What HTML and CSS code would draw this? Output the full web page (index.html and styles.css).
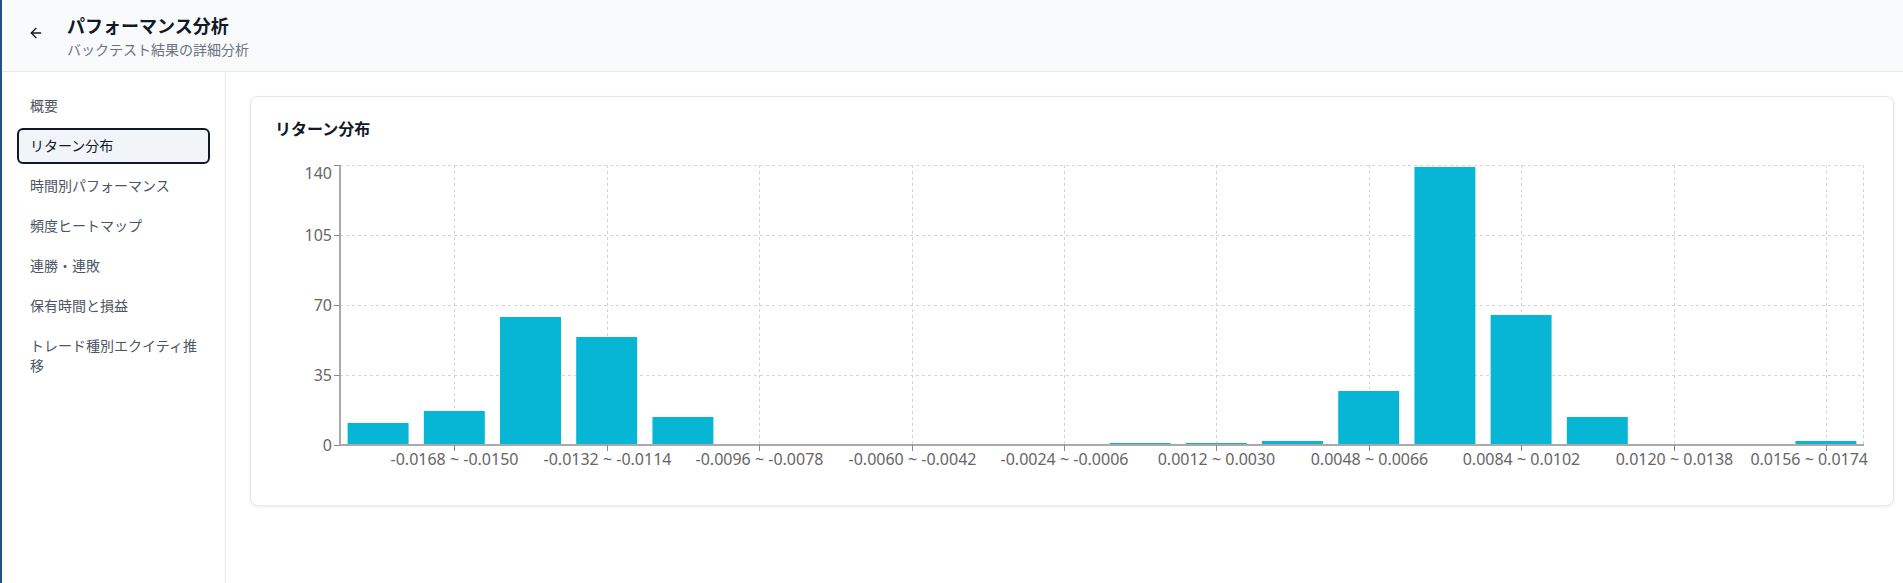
FILE: index.html
```html
<!DOCTYPE html>
<html lang="ja">
<head>
    <meta charset="UTF-8">
    <meta name="viewport" content="width=device-width, initial-scale=1.0">
    <title>パフォーマンス分析</title>
    <link rel="stylesheet" href="styles.css">
</head>
<body>
    <header class="page-header">
        <button class="back-btn" aria-label="戻る">
            <svg width="16" height="16" viewBox="0 0 24 24" fill="none" stroke="currentColor" stroke-width="2" stroke-linecap="round" stroke-linejoin="round">
                <path d="m12 19-7-7 7-7"/>
                <path d="M19 12H5"/>
            </svg>
        </button>
        <div class="header-text">
            <h1>パフォーマンス分析</h1>
            <p>バックテスト結果の詳細分析</p>
        </div>
    </header>

    <div class="layout">
        <nav class="sidebar">
            <button class="nav-item">概要</button>
            <button class="nav-item active">リターン分布</button>
            <button class="nav-item">時間別パフォーマンス</button>
            <button class="nav-item">頻度ヒートマップ</button>
            <button class="nav-item">連勝・連敗</button>
            <button class="nav-item">保有時間と損益</button>
            <button class="nav-item">トレード種別エクイティ推移</button>
        </nav>

        <main class="content">
            <section class="card">
                <h2>リターン分布</h2>
                <div id="chart" class="chart"></div>
            </section>
        </main>
    </div>

    <script>
        // return histogram, bins of 0.0018 starting at -0.0186
        const counts = [11, 17, 64, 54, 14, 0, 0, 0, 0, 0, 1, 1, 2, 27, 139, 65, 14, 0, 0, 2];
        const yTicks = [0, 35, 70, 105, 140];
        const yMax = 140;

        function drawChart() {
            const chart = document.getElementById('chart');
            const width = chart.clientWidth;
            const height = chart.clientHeight;

            const plotLeft = 65;
            const plotRight = width - 5;
            const plotTop = 5;
            const plotBottom = height - 35;
            const bw = (plotRight - plotLeft) / counts.length;

            const y = v => plotBottom - v / yMax * (plotBottom - plotTop);
            const edge = i => ((-186 + i * 18) / 10000).toFixed(4);
            const center = i => Math.round(plotLeft + (i + 0.5) * bw) + 0.5;

            let svg = `<svg width="${width}" height="${height}">`;

            // grid
            yTicks.slice(1).forEach(t => {
                const gy = Math.round(y(t)) + 0.5;
                svg += `<line class="grid" x1="${plotLeft}" x2="${plotRight}" y1="${gy}" y2="${gy}"/>`;
            });
            counts.forEach((c, i) => {
                if (i % 2 === 1) {
                    svg += `<line class="grid" x1="${center(i)}" x2="${center(i)}" y1="${plotTop}" y2="${plotBottom}"/>`;
                }
            });
            svg += `<line class="grid" x1="${plotRight - 0.5}" x2="${plotRight - 0.5}" y1="${plotTop}" y2="${plotBottom}"/>`;

            // bars
            counts.forEach((c, i) => {
                if (c === 0) return;
                const bx = plotLeft + i * bw + bw * 0.1;
                svg += `<rect class="bar" x="${bx}" y="${y(c)}" width="${bw * 0.8}" height="${plotBottom - y(c)}"/>`;
            });

            // y axis
            svg += `<line class="axis" x1="${plotLeft}" x2="${plotLeft}" y1="${plotTop}" y2="${plotBottom}"/>`;
            yTicks.forEach(t => {
                const ty = Math.round(y(t)) + 0.5;
                // top label sits below its tick so it stays inside the chart
                const labelY = t === yMax ? ty + 13.5 : ty + 5.5;
                svg += `<line class="tick" x1="${plotLeft - 6}" x2="${plotLeft}" y1="${ty}" y2="${ty}"/>`;
                svg += `<text x="${plotLeft - 8}" y="${labelY}" text-anchor="end">${t}</text>`;
            });

            // x axis
            svg += `<line class="axis" x1="${plotLeft}" x2="${plotRight}" y1="${plotBottom}" y2="${plotBottom}"/>`;
            counts.forEach((c, i) => {
                if (i % 2 === 1) {
                    svg += `<line class="tick" x1="${center(i)}" x2="${center(i)}" y1="${plotBottom}" y2="${plotBottom + 6}"/>`;
                    svg += `<text class="x-label" x="${center(i)}" y="${plotBottom + 19.5}" text-anchor="middle">${edge(i)} ~ ${edge(i + 1)}</text>`;
                }
            });

            svg += '</svg>';
            chart.innerHTML = svg;

            // keep the outer labels inside the svg
            chart.querySelectorAll('.x-label').forEach(label => {
                const box = label.getBBox();
                if (box.x + box.width > width - 1) {
                    label.setAttribute('text-anchor', 'end');
                    label.setAttribute('x', width - 1);
                }
            });
        }

        drawChart();
    </script>
</body>
</html>
```

FILE: styles.css
```css
* {
    box-sizing: border-box;
}
body {
    margin: 0;
    min-height: 100vh;
    display: flex;
    flex-direction: column;
    font-family: "Noto Sans", "Noto Sans CJK JP", sans-serif;
    color: #111827;
    background: #fff;
    border-left: 2px solid #23527c;
}
.page-header {
    display: flex;
    align-items: flex-start;
    gap: 15px;
    padding: 12px 18px 11px;
    background: #f8fafc;
    border-bottom: 1px solid #e5e7eb;
}
.back-btn {
    width: 32px;
    height: 32px;
    margin-top: 5px;
    padding: 0;
    border: 0;
    background: none;
    color: #111827;
    display: flex;
    align-items: center;
    justify-content: center;
    cursor: pointer;
}
.header-text h1 {
    margin: 0;
    font-size: 18px;
    line-height: 28px;
    font-weight: 700;
}
.header-text p {
    margin: 0;
    font-size: 14px;
    line-height: 20px;
    color: #6b7280;
}
.layout {
    flex: 1;
    display: flex;
}
.sidebar {
    width: 224px;
    flex-shrink: 0;
    display: flex;
    flex-direction: column;
    gap: 4px;
    padding: 16px 15px;
    border-right: 1px solid #e5e7eb;
}
.nav-item {
    font: inherit;
    font-size: 14px;
    line-height: 20px;
    text-align: left;
    padding: 6px 8px 6px 11px;
    border: 2px solid transparent;
    border-radius: 6px;
    background: none;
    color: #4b5563;
    cursor: pointer;
}
.nav-item.active {
    border-color: #111827;
    background: #f1f5f9;
    color: #111827;
}
.content {
    flex: 1;
    padding: 24px 9px 24px 24px;
}
.card {
    background: #fff;
    border: 1px solid #e5e7eb;
    border-radius: 8px;
    padding: 20px 24px 25px;
    box-shadow: 0 1px 3px rgba(0, 0, 0, 0.08);
}
.card h2 {
    margin: 0 0 19px;
    font-size: 16px;
    line-height: 24px;
    font-weight: 700;
}
.chart {
    height: 320px;
}
.chart svg {
    display: block;
    font-size: 16px;
}
.chart text {
    fill: #666;
}
.chart .grid {
    stroke: #d4d4d4;
    stroke-dasharray: 3 3;
}
.chart .axis {
    stroke: #aaa;
    stroke-width: 2;
}
.chart .tick {
    stroke: #888;
}
.chart .bar {
    fill: #06b6d4;
}
```
